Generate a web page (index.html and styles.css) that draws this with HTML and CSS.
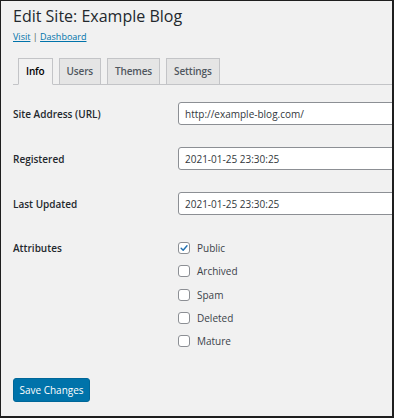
FILE: index.html
```html
<!DOCTYPE html>
<html>
<head>
<meta charset="utf-8">
<link rel="stylesheet" href="styles.css">
</head>
<body>
<div class="frame">
  <h1 class="title">Edit Site: Example Blog</h1>
  <p class="links"><a href="#">Visit</a> | <a href="#">Dashboard</a></p>
  <nav class="tabs">
    <a class="tab active" href="#">Info</a>
    <a class="tab" href="#">Users</a>
    <a class="tab" href="#">Themes</a>
    <a class="tab" href="#">Settings</a>
  </nav>
  <div class="form">
    <label class="label">Site Address (URL)</label>
    <div class="field"><input class="input" type="text" value="http://example-blog.com/"></div>
    <label class="label">Registered</label>
    <div class="field"><input class="input" type="text" value="2021-01-25 23:30:25"></div>
    <label class="label">Last Updated</label>
    <div class="field"><input class="input" type="text" value="2021-01-25 23:30:25"></div>
    <div class="label attr-label">Attributes</div>
    <div class="checks">
      <label class="check"><span class="box checked"><svg viewBox="0 0 12 12" width="12" height="12"><path d="M2.6 6.2 L5 8.6 L9.6 3.2" fill="none" stroke="#2271b1" stroke-width="1.7" stroke-linecap="round" stroke-linejoin="round"/></svg></span>Public</label>
      <label class="check"><span class="box"></span>Archived</label>
      <label class="check"><span class="box"></span>Spam</label>
      <label class="check"><span class="box"></span>Deleted</label>
      <label class="check"><span class="box"></span>Mature</label>
    </div>
  </div>
  <div class="actions"><button class="btn">Save Changes</button></div>
</div>
</body>
</html>
```
FILE: styles.css
```css
* { box-sizing: border-box; }
html, body { margin: 0; padding: 0; }
body {
  font-family: "Open Sans", "Noto Sans", sans-serif;
  color: #23282d;
}
.frame {
  width: 394px;
  height: 418px;
  overflow: hidden;
  background: #f1f1f1;
  border-style: solid;
  border-color: #1e1e1e;
  border-width: 1px 2px 2px 1px;
  padding-left: 12px;
}
.title {
  margin: 4px 0 0 0;
  font-size: 16px;
  font-weight: 400;
  line-height: 22px;
  color: #23282d;
}
.links {
  margin: 3px 0 0 0;
  font-size: 9px;
  line-height: 14px;
  color: #555;
}
.links a { color: #0073aa; text-decoration: underline; }
.tabs {
  display: flex;
  gap: 6px;
  margin-top: 14px;
  padding-left: 5px;
  border-bottom: 1px solid #c3c4c7;
  height: 27px;
}
.tab {
  display: block;
  height: 27px;
  padding: 0 7px;
  font-size: 10px;
  font-weight: 600;
  letter-spacing: -0.15px;
  line-height: 24px;
  color: #50575e;
  background: #e5e5e5;
  border: 1px solid #c3c4c7;
  text-decoration: none;
}
.tab.active {
  background: #f1f1f1;
  color: #000;
  border-bottom-color: #f1f1f1;
}
.form {
  display: grid;
  grid-template-columns: 165px 1fr;
  row-gap: 22px;
  margin-top: 17px;
  align-items: center;
}
.label {
  font-size: 10px;
  font-weight: 600;
  color: #23282d;
}
.field { width: 240px; }
.input {
  display: block;
  width: 240px;
  height: 23px;
  margin: 0;
  padding: 0 6px;
  font-family: "Open Sans", "Noto Sans", sans-serif;
  font-size: 10px;
  color: #32373c;
  background: #fff;
  border: 1px solid #8c8f94;
  border-radius: 3px;
  outline: none;
}
.attr-label { align-self: start; margin-top: 4px; }
.checks {
  display: flex;
  flex-direction: column;
  gap: 11.3px;
  margin-top: 5px;
}
.check {
  display: flex;
  align-items: center;
  gap: 7px;
  height: 12px;
  font-size: 10px;
  color: #3c434a;
}
.box {
  width: 12px;
  height: 12px;
  background: #fff;
  border: 1px solid #8c8f94;
  border-radius: 3px;
  display: flex;
  align-items: center;
  justify-content: center;
}
.box svg { display: block; }
.actions { margin-top: 31px; }
.btn {
  display: block;
  width: 77px;
  height: 24px;
  padding: 0;
  font-family: "Open Sans", "Noto Sans", sans-serif;
  font-size: 10px;
  color: #fff;
  background: #0073aa;
  border: 1px solid #006799;
  border-radius: 3px;
}
```
